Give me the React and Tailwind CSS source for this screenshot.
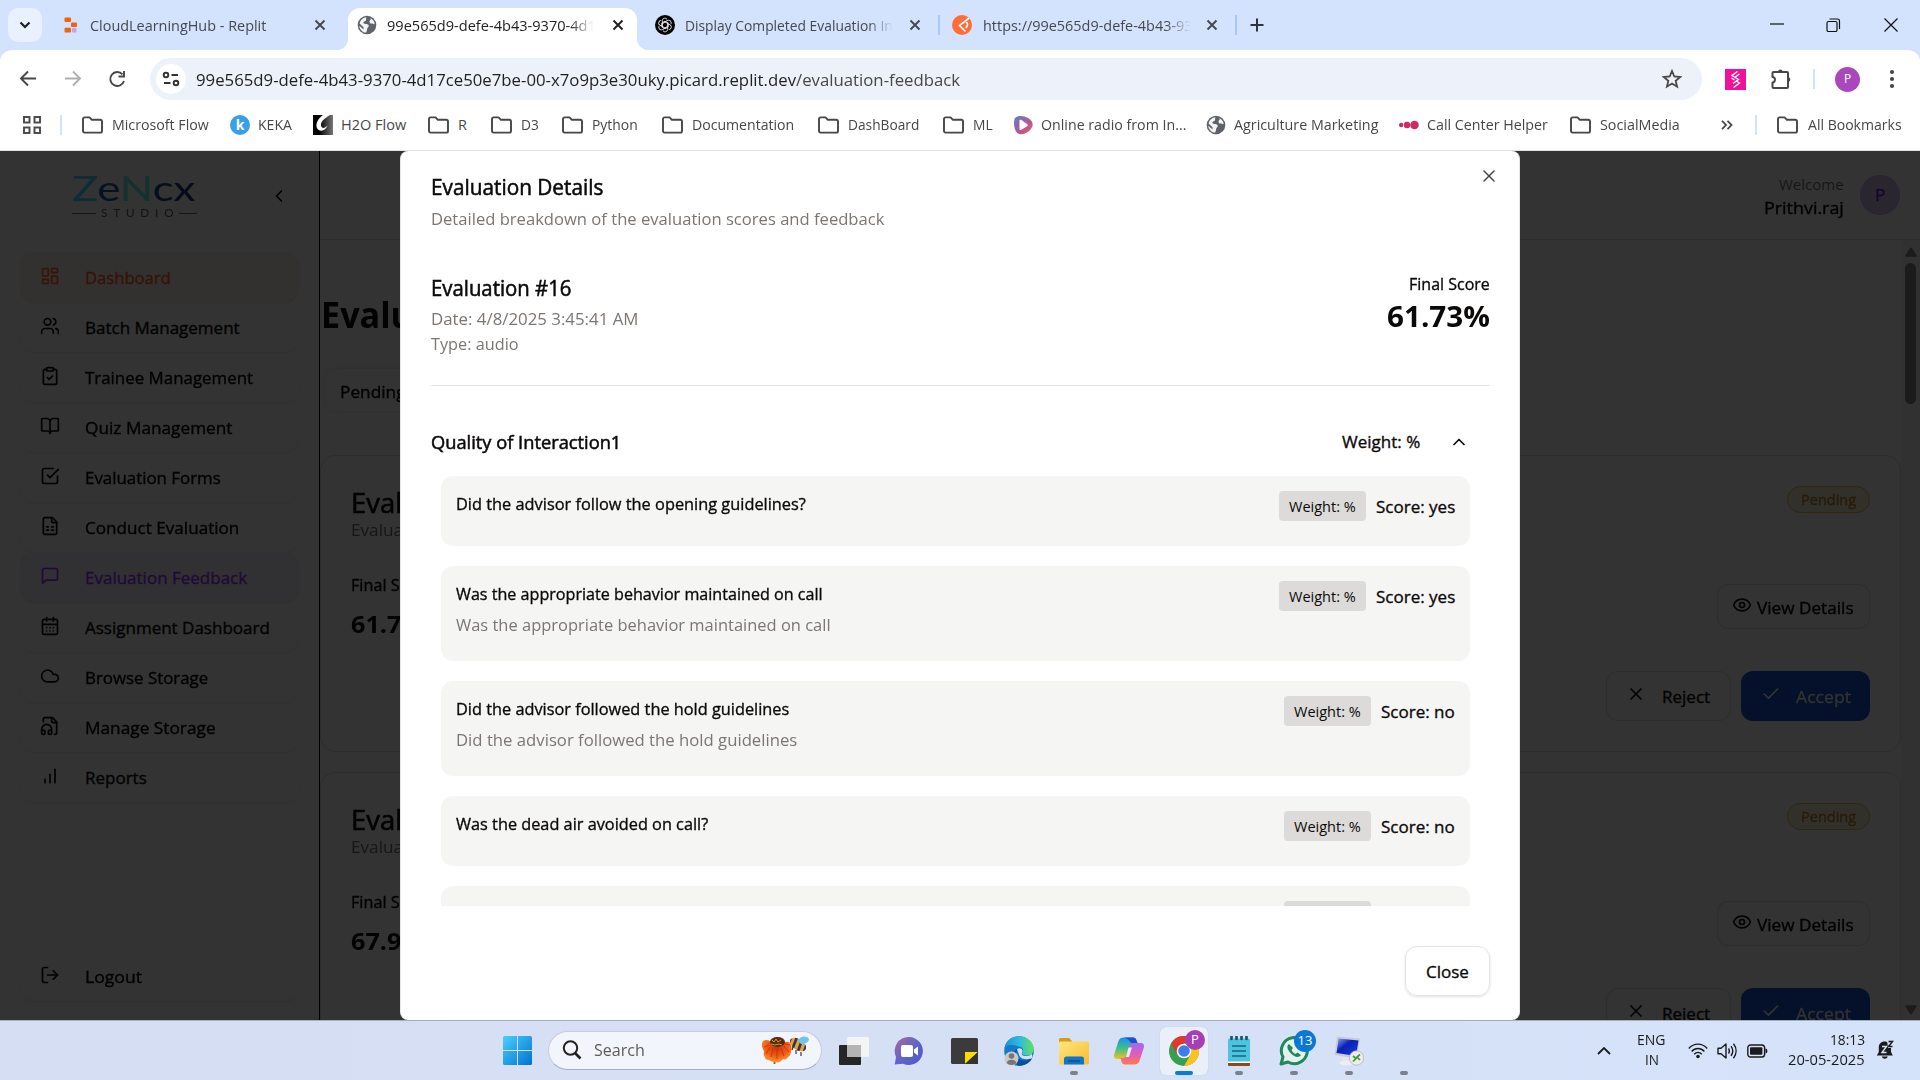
import React, { useLayoutEffect, useRef, useState } from "react";
import {
  LayoutDashboard,
  Users,
  ClipboardCheck,
  BookOpen,
  FileSpreadsheet,
  CalendarDays,
  Cloud,
  LogOut,
  ChevronLeft,
  ChevronUp,
  X,
  Check,
  Eye,
} from "lucide-react";

/* Text condensed or widened so that it fills exactly `w` pixels. */
function Fit({ w, right, className = "", children }) {
  const ref = useRef(null);
  const [k, setK] = useState(1);
  useLayoutEffect(() => {
    const n = ref.current.offsetWidth;
    if (n) setK(w / n);
  }, [w]);
  return (
    <span className={"inline-flex shrink-0 whitespace-nowrap " + (right ? "justify-end " : "") + className} style={{ width: w }}>
      <span ref={ref} className={"inline-block shrink-0 " + (right ? "origin-right" : "origin-left")} style={{ transform: `scaleX(${k})` }}>
        {children}
      </span>
    </span>
  );
}

function Glyph({ paths, size = 20, stroke = 2, className = "" }) {
  return (
    <svg width={size} height={size} viewBox="0 0 24 24" fill="none" stroke="currentColor" strokeWidth={stroke} strokeLinecap="round" strokeLinejoin="round" className={"shrink-0 " + className}>
      {paths.map((d) => (
        <path key={d} d={d} />
      ))}
    </svg>
  );
}

const CheckSquareIcon = () => <Glyph paths={["m9 11 3 3L22 4", "M21 12v7a2 2 0 0 1-2 2H5a2 2 0 0 1-2-2V5a2 2 0 0 1 2-2h11"]} />;
const MessageIcon = () => <Glyph paths={["M21 15a2 2 0 0 1-2 2H7l-4 4V5a2 2 0 0 1 2-2h14a2 2 0 0 1 2 2z"]} />;
const AudioFileIcon = () => (
  <Glyph paths={["M17.5 22h.5a2 2 0 0 0 2-2V7l-5-5H6a2 2 0 0 0-2 2v3", "M14 2v4a2 2 0 0 0 2 2h4", "M2 19a2 2 0 1 1 4 0v1a2 2 0 1 1-4 0v-4a6 6 0 0 1 12 0v4a2 2 0 1 1-4 0v-1a2 2 0 1 1 4 0"]} />
);
const BarsIcon = () => <Glyph paths={["M12 20V10", "M18 20V4", "M6 20v-4"]} />;

/* ---------- browser chrome ---------- */

function Folder() {
  return (
    <svg width="21" height="18" viewBox="0 0 21 18" fill="none" stroke="#474747" strokeWidth="1.9" strokeLinejoin="round">
      <path d="M1 3a1.6 1.6 0 0 1 1.6-1.6H7.600l2.300 2.400h8.500A1.600 1.600 0 0 1 20 5.400v9.600a1.600 1.600 0 0 1-1.600 1.600H2.600A1.600 1.600 0 0 1 1 15z" />
    </svg>
  );
}

function Globe({ size = 20 }) {
  return (
    <svg width={size} height={size} viewBox="0 0 20 20">
      <circle cx="10" cy="10" r="9.300" fill="#5f6368" />
      <path d="M9.500 2.200c-1 1.500.3 2.300-.8 3.500-1 .9-2.300.6-2.300 2 0 1.700 3.800.8 5 2.300 1.200 1.700-1 2.300-1.300 4.200-.1 1.300-.4 2.200-1 3.400C5 17.300 2.500 14 2.300 10.700L6.500 14.600v-2.300L2.600 8.400C3.300 5 6 2.500 9.500 2.200zM13 3c2.500 1 4.300 3 4.700 5.700-1.200 1.200-1.600-.3-2.800-.2-1.500 0-2.300-.5-2.400-1.800-.1-1.200 1.400-1.400 1.200-2.600z" fill="#f1f3f4" />
    </svg>
  );
}

function TabX({ className }) {
  return (
    <svg width="12" height="12" viewBox="0 0 12 12" stroke="currentColor" strokeWidth="1.900" className={"shrink-0 " + className}>
      <path d="M1.500 1.500l9 9M10.500 1.500l-9 9" />
    </svg>
  );
}

function ReplitIcon() {
  return (
    <svg width="14" height="16" viewBox="0 0 14 16" className="shrink-0">
      <rect x="0.500" y="0.500" width="6.500" height="4.600" rx="1" fill="#f26207" />
      <rect x="7" y="5.400" width="6" height="4.600" rx="1" fill="#f26207" />
      <rect x="0.500" y="10.800" width="6.500" height="4.700" rx="1" fill="#f26207" />
      <rect x="8" y="11" width="4.500" height="4.500" rx="1" fill="#b9a5f5" />
    </svg>
  );
}

function KnotIcon() {
  return (
    <svg width="20" height="20" viewBox="0 0 20 20" className="shrink-0">
      <circle cx="10" cy="10" r="10" fill="#000" />
      <g fill="none" stroke="#e8e8e8" strokeWidth="0.900">
        {[0, 60, 120, 180, 240, 300].map((a) => (
          <path key={a} transform={`rotate(${a} 10 10)`} d="M7.300 9V5.600a2.600 2.600 0 0 1 4.800-1.200M10 7l3.300 1.900v3" />
        ))}
      </g>
    </svg>
  );
}

function PostmanIcon() {
  return (
    <svg width="20" height="20" viewBox="0 0 20 20" className="shrink-0">
      <circle cx="10" cy="10" r="10" fill="#ff6c37" />
      <path d="M16.500 3.500L7.500 10.500l5.500 5.500M14.500 7.500c1.600 1 1.300 3.600-.5 5" fill="none" stroke="#fff" strokeWidth="1.600" strokeLinecap="round" />
    </svg>
  );
}

function TabStrip() {
  return (
    <div className="flex h-[50px] items-center bg-[#d3e2fd] text-[14.5px] text-[#45494e]">
      <div className="ml-2 flex h-[34px] w-[34px] shrink-0 items-center justify-center rounded-[10px] bg-[#e9f0fe]">
        <svg width="12" height="8" viewBox="0 0 12 8" fill="none" stroke="#1f1f1f" strokeWidth="2.200">
          <path d="M1.500 1.500L6 6l4.500-4.500" />
        </svg>
      </div>
      <div className="ml-[22px] flex w-[284px] shrink-0 items-center">
        <ReplitIcon />
        <Fit w={176} className="ml-3 pt-px">CloudLearningHub - Replit</Fit>
        <TabX className="ml-[48px]" />
      </div>
      <div className="relative flex h-[42px] w-[289px] shrink-0 items-center self-end rounded-t-[12px] bg-white pb-[8px] text-[#1f1f1f]">
        <span className="absolute bottom-0 -left-3 h-3 w-3 bg-[radial-gradient(circle_at_0_0,transparent_12px,white_12.5px)]" />
        <span className="absolute -right-3 bottom-0 h-3 w-3 bg-[radial-gradient(circle_at_100%_0,transparent_12px,white_12.5px)]" />
        <span className="ml-[9px]"><Globe /></span>
        <span className="ml-[10px] flex w-[207px] overflow-hidden pt-px [mask-image:linear-gradient(to_right,black_88%,transparent)]">
          <Fit w={209}>99e565d9-defe-4b43-9370-4d1</Fit>
        </span>
        <TabX className="ml-[18px]" />
      </div>
      <div className="ml-[18px] flex shrink-0 items-center">
        <KnotIcon />
        <span className="ml-[10px] flex w-[208px] overflow-hidden pt-px [mask-image:linear-gradient(to_right,black_88%,transparent)]">
          <Fit w={208}>Display Completed Evaluation In</Fit>
        </span>
        <TabX className="ml-4" />
      </div>
      <div className="ml-[17px] h-5 w-[2px] shrink-0 bg-[#a8c7fa]" />
      <div className="ml-3 flex shrink-0 items-center">
        <PostmanIcon />
        <span className="ml-[11px] flex w-[208px] overflow-hidden pt-px [mask-image:linear-gradient(to_right,black_88%,transparent)]">
          <Fit w={210}>https://99e565d9-defe-4b43-93</Fit>
        </span>
        <TabX className="ml-[15px]" />
      </div>
      <div className="ml-[17px] h-5 w-[2px] shrink-0 bg-[#a8c7fa]" />
      <svg width="14" height="14" viewBox="0 0 14 14" stroke="#30343a" strokeWidth="2" className="ml-[13px] shrink-0">
        <path d="M7 .5v13M.5 7h13" />
      </svg>
      <svg width="128" height="14" viewBox="0 0 128 14" fill="none" stroke="#111" strokeWidth="1.200" className="mr-[22px] ml-auto shrink-0">
        <path d="M0 6h14" />
        <rect x="57" y="3.500" width="10" height="10" rx="1.500" />
        <path d="M59.500 1h8a2 2 0 0 1 2 2v8" />
        <path d="M114.500 .5l13 13M127.500 .5l-13 13" />
      </svg>
    </div>
  );
}

function Toolbar() {
  return (
    <div className="bg-[#d3e2fd]">
      <div className="flex h-[50px] items-center rounded-t-[12px] bg-white pt-2">
        <svg width="108" height="18" viewBox="0 0 108 18" fill="none" strokeWidth="1.900" className="ml-[19px] shrink-0">
          <path d="M17 8.500H2M9 1.500l-7 7 7 7" stroke="#474747" />
          <path d="M46 8.500h15M54 1.500l7 7-7 7" stroke="#b0b0b0" />
          <path d="M103.500 4.300A7 7 0 1 0 105 11M105 1v5.500h-5.500" stroke="#474747" />
        </svg>
        <div className="ml-[23px] flex h-[42px] w-[1552px] shrink-0 items-center rounded-full bg-[#ecf1fa]">
          <div className="ml-[6px] flex h-[30px] w-[30px] items-center justify-center rounded-full bg-white">
            <svg width="18" height="16" viewBox="0 0 18 16" fill="none" stroke="#333" strokeWidth="1.900">
              <circle cx="4" cy="4" r="2.300" />
              <path d="M9.500 4H16M2 12h6.500" />
              <circle cx="14" cy="12" r="2.300" />
            </svg>
          </div>
          <Fit w={764} className="ml-[10px] pt-px text-[17px] text-[#1f1f1f]">
            99e565d9-defe-4b43-9370-4d17ce50e7be-00-x7o9p3e30uky.picard.replit.dev<span className="text-[#474747]">/evaluation-feedback</span>
          </Fit>
          <svg width="20" height="20" viewBox="0 0 20 20" fill="none" stroke="#474747" strokeWidth="1.800" className="mr-[20px] ml-auto">
            <path d="M10 2l2.300 5.500 5.900.5-4.500 3.900 1.400 5.800L10 14.600l-5.100 3.100 1.400-5.800L1.800 8l5.900-.5z" />
          </svg>
        </div>
        <svg width="21" height="21" viewBox="0 0 21 21" className="ml-[23px] shrink-0">
          <rect width="21" height="21" fill="#f0109a" />
          <path d="M12.500 2.500L7 6.500l6.500 4L8 14.500M14.500 5L9.500 8.500M12 12.500l2.500 1.500-6 4.500M6.500 9l3 2" fill="none" stroke="#fff" strokeWidth="1.400" />
        </svg>
        <svg width="22" height="22" viewBox="0 0 22 22" fill="none" stroke="#474747" strokeWidth="2" className="ml-6 shrink-0">
          <path d="M2.500 5a1 1 0 0 1 1-1h13.500a1 1 0 0 1 1 1v14a1 1 0 0 1-1 1H3.500a1 1 0 0 1-1-1v-4.500c3 0 3.500-5.500 0-5.500z" strokeLinejoin="round" />
          <path d="M8 4a2.300 2.300 0 0 1 4.600 0zM18 9.500a2.300 2.300 0 0 1 0 4.600z" fill="#474747" stroke="none" transform="translate(0 -.3)" />
        </svg>
        <div className="ml-[21px] h-5 w-[2px] shrink-0 bg-[#d3e3fd]" />
        <div className="ml-[20px] flex h-[25px] w-[25px] shrink-0 items-center justify-center rounded-full bg-[#ab47bc] text-[12px] text-white">P</div>
        <svg width="6" height="20" viewBox="0 0 6 20" fill="#474747" className="ml-[29px] shrink-0">
          <circle cx="3" cy="3" r="2.100" />
          <circle cx="3" cy="10" r="2.100" />
          <circle cx="3" cy="17" r="2.100" />
        </svg>
      </div>
    </div>
  );
}

const KekaIcon = () => (
  <span className="flex h-5 w-5 items-center justify-center rounded-full bg-[#36a0e8] text-[14px] leading-none font-bold text-white">k</span>
);
const H2OIcon = () => (
  <svg width="20" height="20" viewBox="0 0 20 20">
    <defs>
      <linearGradient id="h2o" x1="0" y1="0" x2="1" y2="0">
        <stop offset="0.300" stopColor="#000" />
        <stop offset="1" stopColor="#777" />
      </linearGradient>
    </defs>
    <rect width="20" height="20" fill="url(#h2o)" />
    <path d="M10 0C4 4 1.500 11 5 14.500c4 3 8 0 9.500-4-3 3.500-6 3-6.500 0C7.500 7 11 3.500 17 0z" fill="#fff" />
  </svg>
);
const RadioIcon = () => (
  <svg width="20" height="20" viewBox="0 0 20 20">
    <defs>
      <linearGradient id="radio" x1="0" y1="0" x2="1" y2="1">
        <stop offset="0" stopColor="#5a7fd0" />
        <stop offset="0.600" stopColor="#b8568f" />
        <stop offset="1" stopColor="#ff5a6a" />
      </linearGradient>
    </defs>
    <path d="M2 3c3-3 9-2.500 13 0 5 3 6 7 3 11-3 4-8 6-12 5-5-2-6-12-4-16z" fill="url(#radio)" />
    <path d="M6.500 5.500c0-1 1-1 2-.5l5.500 4c1 .8 1 1.500 0 2.200l-5.500 3.600c-1 .5-2 .3-2-.8z" fill="#fff" />
  </svg>
);
const DotsIcon = () => (
  <svg width="20" height="10" viewBox="0 0 20 10" fill="#cf2a62">
    <circle cx="2.200" cy="5" r="2.200" />
    <circle cx="8" cy="5" r="3.200" />
    <circle cx="15.500" cy="5" r="4.300" />
  </svg>
);

const bookmarks = [
  { icon: Folder, text: "Microsoft Flow", w: 97, gap: 21 },
  { icon: KekaIcon, text: "KEKA", w: 34, gap: 21, tight: true },
  { icon: H2OIcon, text: "H2O Flow", w: 65, gap: 22, tight: true },
  { icon: Folder, text: "R", w: 9, gap: 24 },
  { icon: Folder, text: "D3", w: 18, gap: 23 },
  { icon: Folder, text: "Python", w: 46, gap: 24 },
  { icon: Folder, text: "Documentation", w: 102, gap: 24 },
  { icon: Folder, text: "DashBoard", w: 71, gap: 24 },
  { icon: Folder, text: "ML", w: 20, gap: 20 },
  { icon: RadioIcon, text: "Online radio from In...", w: 145, gap: 20, tight: true },
  { icon: Globe, text: "Agriculture Marketing", w: 144, gap: 21, tight: true },
  { icon: DotsIcon, text: "Call Center Helper", w: 121, gap: 22, tight: true },
  { icon: Folder, text: "SocialMedia", w: 80, gap: 0 },
];

function Bookmarks() {
  return (
    <div className="flex h-[50px] items-center bg-white text-[14.5px] text-[#474747]">
      <svg width="18" height="18" viewBox="0 0 18 18" fill="none" stroke="#474747" strokeWidth="1.900" className="ml-[23px] shrink-0">
        <rect x="1" y="1" width="5.500" height="5.500" />
        <rect x="11.500" y="1" width="5.500" height="5.500" />
        <rect x="1" y="11.500" width="5.500" height="5.500" />
        <rect x="11.500" y="11.500" width="5.500" height="5.500" />
      </svg>
      <div className="mr-[20px] ml-[19px] h-5 w-[2px] shrink-0 bg-[#d3e3fd]" />
      {bookmarks.map(({ icon: Icon, text, w, gap, tight }) => (
        <div key={text} className="flex shrink-0 items-center" style={{ marginRight: gap }}>
          <span className={tight ? "mr-2 shrink-0" : "mr-[9px] shrink-0"}><Icon /></span>
          <Fit w={w}>{text}</Fit>
        </div>
      ))}
      <svg width="12" height="10" viewBox="0 0 12 10" fill="none" stroke="#474747" strokeWidth="1.800" className="mr-[22px] ml-auto shrink-0">
        <path d="M1 .8L5 5 1 9.200M6.500.8L10.500 5l-4 4.200" />
      </svg>
      <div className="mr-[20px] h-5 w-[2px] shrink-0 bg-[#d3e3fd]" />
      <span className="mr-[10px] shrink-0"><Folder /></span>
      <Fit w={94} className="mr-[18px]">All Bookmarks</Fit>
    </div>
  );
}

/* ---------- page behind the dialog ---------- */

const nav = [
  { icon: LayoutDashboard, text: "Dashboard", w: 86, cls: "bg-[#33312f] text-[#381306]" },
  { icon: Users, text: "Batch Management", w: 155 },
  { icon: ClipboardCheck, text: "Trainee Management", w: 168 },
  { icon: BookOpen, text: "Quiz Management", w: 147 },
  { icon: CheckSquareIcon, text: "Evaluation Forms", w: 136 },
  { icon: FileSpreadsheet, text: "Conduct Evaluation", w: 154 },
  { icon: MessageIcon, text: "Evaluation Feedback", w: 162, cls: "bg-[#313133] text-[#210936]" },
  { icon: CalendarDays, text: "Assignment Dashboard", w: 185 },
  { icon: Cloud, text: "Browse Storage", w: 123 },
  { icon: AudioFileIcon, text: "Manage Storage", w: 131 },
  { icon: BarsIcon, text: "Reports", w: 62 },
];

function NavItem({ icon: Icon, text, w, cls = "text-[#020202]" }) {
  return (
    <div className={"flex h-[50px] items-center rounded-[14px] shadow-[0_1px_1px_rgba(0,0,0,0.06)] " + cls}>
      <span className="mb-[3px] ml-5 w-5 shrink-0"><Icon size={20} /></span>
      <Fit w={w} className="ml-[25px] pt-[2px] text-[17px] [-webkit-text-stroke:0.35px]">{text}</Fit>
    </div>
  );
}

function Sidebar() {
  return (
    <div className="flex w-[320px] shrink-0 flex-col border-r border-black">
      <div className="flex h-[101px] items-start pt-[18px] pl-[72px]">
        <div className="flex w-[125px] shrink-0 flex-col">
          <div className="flex h-[36px] items-center font-['Lato'] text-[35px] leading-none">
            <Fit w={124} className="pt-px">
              <span className="text-[#0d2c36]">Z</span><span className="text-[#07121f]">e</span><span className="text-[#12312f]">N</span><span className="text-[#060e1c]">c</span><span className="text-[#060a1a]">x</span>
            </Fit>
          </div>
          <div className="mt-[2px] flex items-center font-['Lato'] text-[12px] leading-[12px] text-[#101419]">
            <span className="h-px w-6 bg-[#14181b]" />
            <Fit w={73} className="mx-[5px] tracking-[6px]">STUDI<span className="tracking-normal">O</span></Fit>
            <span className="h-px w-[18px] bg-[#14181b]" />
          </div>
        </div>
        <div className="ml-[62px] flex h-10 w-10 items-center justify-center rounded-full pt-[14px]">
          <ChevronLeft size={20} color="#000" />
        </div>
      </div>
      <div className="flex flex-col px-5">
        {nav.map((n) => (
          <NavItem key={n.text} {...n} />
        ))}
      </div>
      <div className="mt-auto mb-[19px] px-5">
        <NavItem icon={LogOut} text="Logout" w={57} />
      </div>
    </div>
  );
}

function EvalCard({ score }) {
  return (
    <div className="flex h-[297px] shrink-0 justify-between rounded-[15px] border border-[#2d2d2d] pr-[30px] pl-[30px]">
      <div className="flex flex-col pt-[28px]">
        <Fit w={189} className="text-[28px] leading-[36px] text-[#020202] [-webkit-text-stroke:0.6px]">Evaluation #16</Fit>
        <Fit w={112} className="text-[17px] leading-[20px] text-[#171615]">Evaluated Call</Fit>
        <Fit w={82} className="mt-[32px] text-[17px] leading-[26px] text-[#020202] [-webkit-text-stroke:0.35px]">Final Score</Fit>
        <Fit w={87} className="mt-[6px] text-[24px] leading-[40px] font-bold text-[#020202]">{score}</Fit>
      </div>
      <div className="flex flex-col items-end pt-[30px]">
        <div className="flex h-[27px] w-[83px] items-center justify-center rounded-full border border-[#30260c] bg-[#32302b] text-[14px] text-[#291a07] [-webkit-text-stroke:0.3px]">
          <Fit w={55}>Pending</Fit>
        </div>
        <div className="mt-[71px] flex h-[45px] w-[153px] items-center rounded-[11px] border border-[#2d2d2d] pl-[14px] text-[17px] text-[#020202]">
          <Eye size={20} className="mb-1" />
          <Fit w={97} className="ml-[5px] pt-[2px] [-webkit-text-stroke:0.35px]">View Details</Fit>
        </div>
        <div className="mt-[42px] flex gap-[10px] text-[17px]">
          <div className="flex h-[50px] w-[125px] items-center rounded-[12px] border border-[#2d2d2d] pl-[19px] text-[#020202]">
            <X size={20} className="mb-1" />
            <Fit w={48} className="ml-[16px] pt-[2px] [-webkit-text-stroke:0.35px]">Reject</Fit>
          </div>
          <div className="flex h-[50px] w-[129px] items-center rounded-[12px] bg-[#05112a] pl-[20px] text-[#333333]">
            <Check size={20} className="mb-1" />
            <Fit w={55} className="ml-[15px] pt-[2px] [-webkit-text-stroke:0.35px]">Accept</Fit>
          </div>
        </div>
      </div>
    </div>
  );
}

function Main() {
  return (
    <div className="flex min-w-0 flex-1 flex-col">
      <div className="flex h-[89px] shrink-0 items-center justify-end border-b border-[#2d2d2d] pr-5 pb-[1px]">
        <div className="mt-[4px] flex flex-col items-end">
          <Fit w={65} className="text-[15px] leading-[22px] text-[#171615]">Welcome</Fit>
          <Fit w={80} className="text-[17px] leading-[26px] text-[#020202] [-webkit-text-stroke:0.35px]">Prithvi.raj</Fit>
        </div>
        <div className="ml-4 flex h-10 w-10 items-center justify-center rounded-full bg-[#2a262f] text-[17px] text-[#16062a] [-webkit-text-stroke:0.35px]">P</div>
      </div>
      <div className="flex min-h-0 flex-1">
        <div className="flex min-w-0 flex-1 flex-col overflow-hidden">
          <h1 className="mt-[50px] ml-[1px] flex text-[36px] leading-[50px] font-bold text-[#020202]">
            <Fit w={352}>Evaluation Feedback</Fit>
          </h1>
          <div className="mt-[29px] ml-[5px] flex h-[42px] w-[200px] shrink-0 items-center rounded-[10px] pl-[15px] shadow-[0_0_3px_rgba(0,0,0,0.12)]">
            <Fit w={66} className="pt-[3px] text-[17px] text-[#020202] [-webkit-text-stroke:0.35px]">Pending</Fit>
          </div>
          <div className="mt-[44px] flex flex-col gap-[20px]">
            <EvalCard score="61.73%" />
            <EvalCard score="67.90%" />
          </div>
        </div>
        <div className="flex w-[19px] shrink-0 flex-col items-center bg-[#313131] pt-[7px] pb-[5px]">
          <svg width="12" height="10" viewBox="0 0 12 10"><path d="M5 1.200a1.200 1.200 0 0 1 2 0l4.500 7q.3 1.500-1 1.500H1.500q-1.300 0-1-1.500z" fill="#1b1b1b" /></svg>
          <div className="mt-[6px] h-[141px] w-[11px] rounded-full bg-[#1b1b1b]" />
          <svg width="12" height="10" viewBox="0 0 12 10" className="mt-auto rotate-180"><path d="M5 1.200a1.200 1.200 0 0 1 2 0l4.500 7q.3 1.500-1 1.500H1.500q-1.300 0-1-1.500z" fill="#1b1b1b" /></svg>
        </div>
      </div>
    </div>
  );
}

/* ---------- dialog ---------- */

const questions = [
  { q: "Did the advisor follow the opening guidelines?", w: 350, score: "Score: yes", sw: 79 },
  { q: "Was the appropriate behavior maintained on call", w: 367, sub: "Was the appropriate behavior maintained on call", subW: 375, score: "Score: yes", sw: 79 },
  { q: "Did the advisor followed the hold guidelines", w: 333, sub: "Did the advisor followed the hold guidelines", subW: 341, score: "Score: no", sw: 74 },
  { q: "Was the dead air avoided on call?", w: 252, score: "Score: no", sw: 74 },
  { q: "", w: 0, score: "Score: no", sw: 74 },
];

function Question({ q, w, sub, subW, score, sw }) {
  return (
    <div className={"flex shrink-0 justify-between rounded-[12px] bg-[#f5f5f4] px-[15px] pt-[15px] " + (sub ? "h-[95px]" : "h-[70px]")}>
      <div className="flex flex-col">
        <Fit w={w} className="text-[17px] leading-[26px] [-webkit-text-stroke:0.35px]">{q}</Fit>
        {sub && <Fit w={subW} className="mt-[3px] text-[17px] leading-[29px] text-[#7c7672]">{sub}</Fit>}
      </div>
      <div className="flex h-[30px] items-center">
        <div className="flex h-[30px] w-[87px] items-center justify-center rounded-[4px] bg-[#dcdbd9] text-[14.5px]">
          <Fit w={67} className="pt-px">Weight: %</Fit>
        </div>
        <Fit w={sw} className="ml-[10px] pt-[2px] text-[17px] [-webkit-text-stroke:0.35px]">{score}</Fit>
      </div>
    </div>
  );
}

function Dialog() {
  return (
    <div className="absolute inset-y-0 left-[400px] flex w-[1120px] flex-col rounded-[8px] border-x border-[#e5e5e5] bg-white pr-[29px] pl-[30px] text-[#0c0a09]">
      <X size={20} color="#444" strokeWidth={1.7} className="absolute top-[15px] right-[20px]" />
      <Fit w={172} className="mt-[20px] text-[21.5px] leading-[32px] [-webkit-text-stroke:0.55px]">Evaluation Details</Fit>
      <Fit w={453} className="mt-[1px] text-[17px] leading-[29px] text-[#7c7672]">Detailed breakdown of the evaluation scores and feedback</Fit>
      <div className="mt-[39px] flex justify-between">
        <div className="flex flex-col">
          <Fit w={140} className="text-[21.5px] leading-[32px] [-webkit-text-stroke:0.55px]">Evaluation #16</Fit>
          <Fit w={207} className="mt-[2px] text-[17px] leading-[26px] text-[#7c7672]">Date: 4/8/2025 3:45:41 AM</Fit>
          <Fit w={88} className="text-[17px] leading-[24px] text-[#7c7672]">Type: audio</Fit>
        </div>
        <div className="flex flex-col items-end">
          <Fit w={81} className="text-[17px] leading-[24px] [-webkit-text-stroke:0.35px]">Final Score</Fit>
          <Fit w={103} className="mt-[2px] text-[28.500px] leading-[36px] font-bold">61.73%</Fit>
        </div>
      </div>
      <div className="mt-[29px] h-px shrink-0 bg-[#e7e5e4]" />
      <div className="mt-[36px] flex h-[40px] shrink-0 items-center">
        <Fit w={190} className="text-[17.500px] [-webkit-text-stroke:0.5px]">Quality of Interaction1</Fit>
        <Fit w={78} className="mr-[29px] ml-auto text-[17px] [-webkit-text-stroke:0.35px]">Weight: %</Fit>
        <ChevronUp size={20} className="mr-[21px]" />
      </div>
      <div className="mt-[14px] mr-[20px] ml-[10px] flex h-[430px] shrink-0 flex-col gap-[20px] overflow-hidden">
        {questions.map((item) => (
          <Question key={item.q} {...item} />
        ))}
      </div>
      <div className="mt-[40px] flex justify-end">
        <div className="flex h-[50px] w-[85px] items-center justify-center rounded-[12px] border border-[#e7e5e4] text-[17px] shadow-sm">
          <Fit w={43} className="pt-px [-webkit-text-stroke:0.35px]">Close</Fit>
        </div>
      </div>
    </div>
  );
}

/* ---------- taskbar ---------- */

function TaskIcon({ children, run, active }) {
  return (
    <div className={"relative flex h-12 w-12 shrink-0 items-center justify-center rounded-[6px] " + (active ? "bg-[#ebeff9] shadow-[0_0_1px_rgba(0,0,0,0.2)]" : "")}>
      {children}
      {run && <span className={"absolute bottom-0 h-[4px] rounded-full " + (active ? "w-[18px] bg-[#0a7ad8]" : "w-2 bg-[#7d8088]")} />}
    </div>
  );
}

function Defs() {
  return (
    <svg width="0" height="0" className="absolute">
      <defs>
        <linearGradient id="win" x1="0" y1="0" x2="1" y2="1"><stop offset="0" stopColor="#4ad0ff" /><stop offset="1" stopColor="#0072d0" /></linearGradient>
        <linearGradient id="teams" x1="0" y1="0" x2="1" y2="1"><stop offset="0" stopColor="#a86a9c" /><stop offset=".5" stopColor="#6264c8" /><stop offset="1" stopColor="#4a58d0" /></linearGradient>
        <linearGradient id="edgeTop" x1="0" y1="0" x2="1" y2="0"><stop offset="0" stopColor="#1c8fd8" /><stop offset=".5" stopColor="#2bbbe0" /><stop offset="1" stopColor="#66e05a" /></linearGradient>
        <linearGradient id="fold" x1="0" y1="0" x2="1" y2="1"><stop offset="0" stopColor="#ffe680" /><stop offset="1" stopColor="#f8bd2c" /></linearGradient>
        <linearGradient id="copL" x1="0" y1="0" x2="0" y2="1"><stop offset="0" stopColor="#1f8df0" /><stop offset=".5" stopColor="#3cc08a" /><stop offset="1" stopColor="#f4c020" /></linearGradient>
        <linearGradient id="copR" x1="0" y1="0" x2="0" y2="1"><stop offset="0" stopColor="#9a6df0" /><stop offset=".5" stopColor="#e05ac0" /><stop offset="1" stopColor="#ff7a4a" /></linearGradient>
        <linearGradient id="screen" x1="0" y1="0" x2="1" y2="1"><stop offset="0" stopColor="#8aa8f0" /><stop offset=".4" stopColor="#0a1fb8" /><stop offset="1" stopColor="#2040d0" /></linearGradient>
        <radialGradient id="petal" cx=".5" cy=".35" r=".6"><stop offset="0" stopColor="#c9330c" /><stop offset=".6" stopColor="#f05a16" /><stop offset="1" stopColor="#fb8c2a" /></radialGradient>
        <clipPath id="beeBody"><ellipse cx="36" cy="9.500" rx="9" ry="5.500" transform="rotate(35 36 9.500)" /></clipPath>
      </defs>
    </svg>
  );
}

function FlowerAndBee() {
  return (
    <svg width="48" height="30" viewBox="0 0 48 30" className="mr-[11px] ml-auto">
      <path d="M12.500 20v9" stroke="#5e8c2a" strokeWidth="2" />
      <path d="M1 6c3-2 6-1 8 1 2-3 9-4 12 0 3 0 6-1 7 1 2 3 2 6 1 8 0 3-1 5-3 6-1 2-3 3-5 2-2 3-5 4-8 3-3 0-5-1-6-2-3 0-4-1-4-3C1 20 2 18 2 16c-2-3-3-7-1-10z" fill="url(#petal)" />
      <path d="M8 12l-4 7M11 13l-2 9M15 13v11M19 13l3 8M22 11l5 6M7 10l-5 2M23 9l5 1" stroke="#c2360c" strokeWidth="0.900" />
      <ellipse cx="15.500" cy="7" rx="7.500" ry="5" fill="#5a2c0c" />
      <path d="M10 5l2 2 2-3 2 3 3-2M9 9l4 1 4-1 3 1" stroke="#d9952a" fill="none" />
      <ellipse cx="36" cy="9.500" rx="9" ry="5.500" fill="#e0a63a" transform="rotate(35 36 9.500)" />
      <g clipPath="url(#beeBody)">
        <path d="M30 0l-4 10M35 2l-5 13M40 5l-5 14M45 8l-4 12" stroke="#3d2f55" strokeWidth="2.600" />
      </g>
      <path d="M36 6c1-5 9-6 11-2 0 4-5 5-8 5z" fill="#6fc4ee" />
      <path d="M31 12l-1 3M34 15v4M39 17v4" stroke="#3d2f55" strokeWidth="1.200" />
    </svg>
  );
}

function Taskbar() {
  return (
    <div className="flex h-[60px] items-center border-t border-[#a5aebf] bg-gradient-to-r from-[#d6def3] via-[#d6e0f5] to-[#d5e3fa] text-[#1b1b1b]">
      <Defs />
      <svg width="29" height="29" viewBox="0 0 29 29" fill="url(#win)" className="ml-[503px] shrink-0">
        <path d="M1.500 0H14v14H0V1.500A1.500 1.500 0 0 1 1.500 0zM15 0h12.500A1.500 1.500 0 0 1 29 1.500V14H15zM0 15h14v14H1.500A1.500 1.500 0 0 1 0 27.500zM15 15h14v12.500a1.500 1.500 0 0 1-1.500 1.500H15z" />
      </svg>
      <div className="mb-px ml-[16px] flex h-[39px] w-[274px] shrink-0 items-center rounded-full border border-[#c3cce4] border-b-[#a3adc6] bg-[#f2f5fc]">
        <svg width="20" height="20" viewBox="0 0 20 20" fill="none" stroke="#222" strokeWidth="2" className="ml-[13px]">
          <circle cx="8.500" cy="8" r="6.700" />
          <path d="M13 13l5.500 5.500" strokeWidth="2.600" />
        </svg>
        <Fit w={51} className="ml-[12px] text-[17px] text-[#5c5c5c]">Search</Fit>
        <FlowerAndBee />
      </div>
      <div className="ml-[8px] flex shrink-0 gap-[7px]">
        <TaskIcon>
          <svg width="30" height="28" viewBox="0 0 30 28">
            <rect y="8" width="22" height="20" rx="1" fill="#262626" />
            <rect x="8" width="22" height="20" rx="1" fill="#f4f4f4" />
            <rect x="8" y="8" width="14" height="12" fill="#b4b4b4" />
          </svg>
        </TaskIcon>
        <TaskIcon>
          <svg width="30" height="30" viewBox="0 0 30 30">
            <path d="M15 1a14 14 0 1 1-6 26.700L.7 28.500 2 21A14 14 0 0 1 15 1z" fill="url(#teams)" />
            <rect x="7" y="9" width="12" height="12" rx="2" fill="#fff" />
            <path d="M20 13.500l4-3v9l-4-3z" fill="#fff" />
          </svg>
        </TaskIcon>
        <TaskIcon>
          <svg width="27" height="26" viewBox="0 0 27 26">
            <rect width="27" height="26" rx="1.500" fill="#3b3b3b" />
            <path d="M14 26V14h13z" fill="#ffd900" />
            <path d="M14 26L27 14v12z" fill="#333" />
          </svg>
        </TaskIcon>
        <TaskIcon>
          <svg width="30" height="30" viewBox="0 0 30 30">
            <circle cx="15" cy="15" r="14.800" fill="#1379c8" />
            <path d="M.5 12C2 4 8 .2 15 .2 24 .2 30 7 29.800 13c0 5-5 7-9 6.500-3-.5-3-2-2-3.500 1.500-3-1-5.500-4.300-5.500C9 8 3 8.500.5 12z" fill="url(#edgeTop)" />
            <path d="M14 12c-4 5-1 12 6 12.500 4 .3 6-1.500 8.300-2.500C26 27 20 30 14.500 29.800 8 27 8 15 14 12z" fill="#0c4f9e" />
            <path d="M13 13c3-2 6 0 5.500 2.500-1.500 2.500-.5 4 2 4.500 3 .3 6-.5 7.500-2.500L28.500 22c-4 2-11 1.500-13-2z" fill="#d6dff4" />
            <circle cx="7.500" cy="22.500" r="7" fill="#c9c9c9" />
            <circle cx="7.500" cy="20" r="2.800" fill="#7b7470" />
            <path d="M2.500 27c1-4.500 9-4.500 10 0a7 7 0 0 1-10 0z" fill="#7b7470" />
          </svg>
        </TaskIcon>
        <TaskIcon run>
          <svg width="30" height="28" viewBox="0 0 30 28">
            <path d="M0 2.500A1.500 1.500 0 0 1 1.500 1H10l3 3v7H0z" fill="#d99a12" />
            <rect y="4.500" width="30" height="23" rx="1.500" fill="url(#fold)" />
            <path d="M5 27.500V22a2.500 2.500 0 0 1 2.500-2.500h15A2.500 2.500 0 0 1 25 22v5.500z" fill="#1274c9" />
            <path d="M9 24h12" stroke="#0b4f95" strokeWidth="1.500" />
          </svg>
        </TaskIcon>
        <TaskIcon>
          <svg width="30" height="28" viewBox="0 0 30 28">
            <path d="M10 .5h9c2 0 3 1 3.500 3L24 7h-3c-2 0-3 1-3.600 3L15 18c-1 3-2 4-4.500 4H3c-3 0-3.500-2.500-2.700-5L4.500 4C5.500 1.500 7 .5 10 .5z" fill="url(#copL)" />
            <path d="M10 .5h9c2 0 3 1 3.500 3L24 7h-5c-3-1-3-5-9-6.500z" fill="#1b4fd0" />
            <path d="M20 27.500h-9c-2 0-3-1-3.500-3L6.500 21H9c2 0 3-1 3.600-3L15 10c1-3 2-4 4.500-4H27c3 0 3.500 2.500 2.700 5L25.500 24c-1 2.500-2.500 3.500-5.500 3.500z" fill="url(#copR)" />
            <path d="M14.500 10.500h3.500l-3 9.500h-3z" fill="#e9edf8" />
          </svg>
        </TaskIcon>
        <TaskIcon run active>
          <svg width="30" height="30" viewBox="0 0 30 30">
            <circle cx="15" cy="15" r="15" fill="#34a050" />
            <path d="M2 7.500A15 15 0 0 1 28 7.500H15L8.500 18.700z" fill="#e0392b" />
            <path d="M28 7.500A15 15 0 0 1 15 30l6.500-11.200L15 7.500z" fill="#fcc31c" />
            <circle cx="15" cy="15" r="7.300" fill="#fff" />
            <circle cx="15" cy="15" r="5.800" fill="#3b7ded" />
          </svg>
          <span className="absolute top-[3px] right-[3px] flex h-5 w-5 items-center justify-center rounded-full bg-[#a53fb5] text-[13px] text-white">P</span>
        </TaskIcon>
        <TaskIcon run>
          <svg width="22" height="30" viewBox="0 0 22 30">
            <rect y="25" width="22" height="5" rx="1" fill="#8c4a14" />
            <rect y="2.500" width="22" height="24.500" rx="1.500" fill="#4cc4e0" />
            <path d="M0 25.500h22V27H0z" fill="#fff" />
            <path d="M3.500 0v3M8.500 0v3M13.500 0v3M18.500 0v3" stroke="#17506a" strokeWidth="2.600" strokeLinecap="round" />
            <path d="M4 10h14M4 15h14M4 20h14" stroke="#12687f" strokeWidth="1.700" />
          </svg>
        </TaskIcon>
        <TaskIcon run>
          <svg width="30" height="30" viewBox="0 0 30 30">
            <path d="M2 28l2-7A13 13 0 1 1 9 26z" fill="#e6f0ee" stroke="#1c8a58" strokeWidth="3" strokeLinejoin="round" />
            <path d="M10 8c-3 2-1.500 6 2 9.500s7.500 5 10 1.500l-3.500-2.500-2 1.500c-2-1-3-2-4-4l1.500-2z" fill="#1c8a58" />
          </svg>
          <span className="absolute top-[3px] left-[24px] flex h-[22px] w-[22px] items-center justify-center rounded-full bg-[#0a78d4] text-[13px] text-white">13</span>
        </TaskIcon>
        <TaskIcon run>
          <svg width="30" height="30" viewBox="0 0 30 30">
            <path d="M3 .5l23 2-3 20L.5 19z" fill="#c9ccd4" />
            <path d="M4.500 2.500l20 2-2.500 15.500L2.500 17z" fill="url(#screen)" />
            <path d="M9 21l8 1 2 4-12 .5z" fill="#e6e6ea" />
            <ellipse cx="13" cy="27" rx="8" ry="2.200" fill="#eeeef2" />
            <circle cx="22.500" cy="22" r="7.200" fill="#ececec" stroke="#b4b4b4" strokeWidth=".8" />
            <path d="M19 20l3 2.500-3 3M26 18.500l-3 2.500 3 3" fill="none" stroke="#3f9a35" strokeWidth="1.700" />
          </svg>
        </TaskIcon>
        <TaskIcon run />
      </div>
      <div className="mr-[26px] ml-auto flex shrink-0 items-center">
        <svg width="14" height="8" viewBox="0 0 14 8" fill="none" stroke="#1b1b1b" strokeWidth="1.800"><path d="M1 7l6-6 6 6" /></svg>
        <div className="mb-px ml-[26px] flex flex-col items-center text-[14.5px] leading-[20px]">
          <Fit w={29}>ENG</Fit>
          <Fit w={14}>IN</Fit>
        </div>
        <svg width="20" height="16" viewBox="0 0 20 16" fill="none" stroke="#1b1b1b" strokeWidth="1.400" className="ml-[22px]">
          <path d="M.8 5.500C6-.3 14-.3 19.200 5.500M3.600 8.500c3.600-4 9.200-4 12.800 0M6.200 11.200c2.200-2.400 5.400-2.400 7.600 0" />
          <circle cx="10" cy="13.500" r="1.800" fill="#1b1b1b" stroke="none" />
        </svg>
        <svg width="21" height="18" viewBox="0 0 21 18" fill="none" stroke="#1b1b1b" strokeWidth="1.400" className="ml-[9px]">
          <path d="M1 6.200h3L9 2v14l-5-4.200H1z" strokeLinejoin="round" />
          <path d="M11.500 6.500c1 1.500 1 3.500 0 5M14 4.200c2.200 3 2.200 6.600 0 9.600M16.500 1.800c3.400 4.400 3.400 10 0 14.400" />
        </svg>
        <svg width="21" height="14" viewBox="0 0 21 14" className="ml-[9px]">
          <rect x=".8" y="1" width="16.800" height="12" rx="2.800" fill="none" stroke="#1b1b1b" strokeWidth="1.400" />
          <rect x="3" y="3.200" width="12.400" height="7.600" rx="1" fill="#1b1b1b" />
          <path d="M18.500 4.500c2.500 0 2.500 5 0 5z" fill="#1b1b1b" />
        </svg>
        <div className="mb-[2px] ml-[20px] flex flex-col items-end text-[14.5px] leading-[20px]">
          <Fit w={35}>18:13</Fit>
          <Fit w={77}>20-05-2025</Fit>
        </div>
        <svg width="18" height="20" viewBox="0 0 18 20" className="mb-px ml-[11px]">
          <path d="M8.500 1.500C5 1.500 2.800 4 2.800 7v5L.8 15.500h16L15 12V7c0-3-3-5.500-6.500-5.500zM5.800 16.500c1 3 5 3 6 0z" fill="#1b1b1b" />
          <path d="M6 6.500h4.500l-4.500 6h4.500" fill="none" stroke="#d5e3fa" strokeWidth="1.400" />
          <path d="M11 0h7v8h-6z" fill="#d5e3fa" />
          <path d="M12.500 1.500h4l-4 5h4" fill="none" stroke="#1b1b1b" strokeWidth="1.500" />
        </svg>
      </div>
    </div>
  );
}

export default function App() {
  return (
    <div className="flex h-[1080px] w-[1920px] flex-col overflow-hidden bg-white font-['Open_Sans','Noto_Sans',sans-serif] leading-normal">
      <TabStrip />
      <Toolbar />
      <Bookmarks />
      <div className="h-px shrink-0 bg-[#e0e3e1]" />
      <div className="relative flex h-[869px] shrink-0 overflow-hidden bg-[#333333]">
        <Sidebar />
        <Main />
        <Dialog />
      </div>
      <Taskbar />
    </div>
  );
}
